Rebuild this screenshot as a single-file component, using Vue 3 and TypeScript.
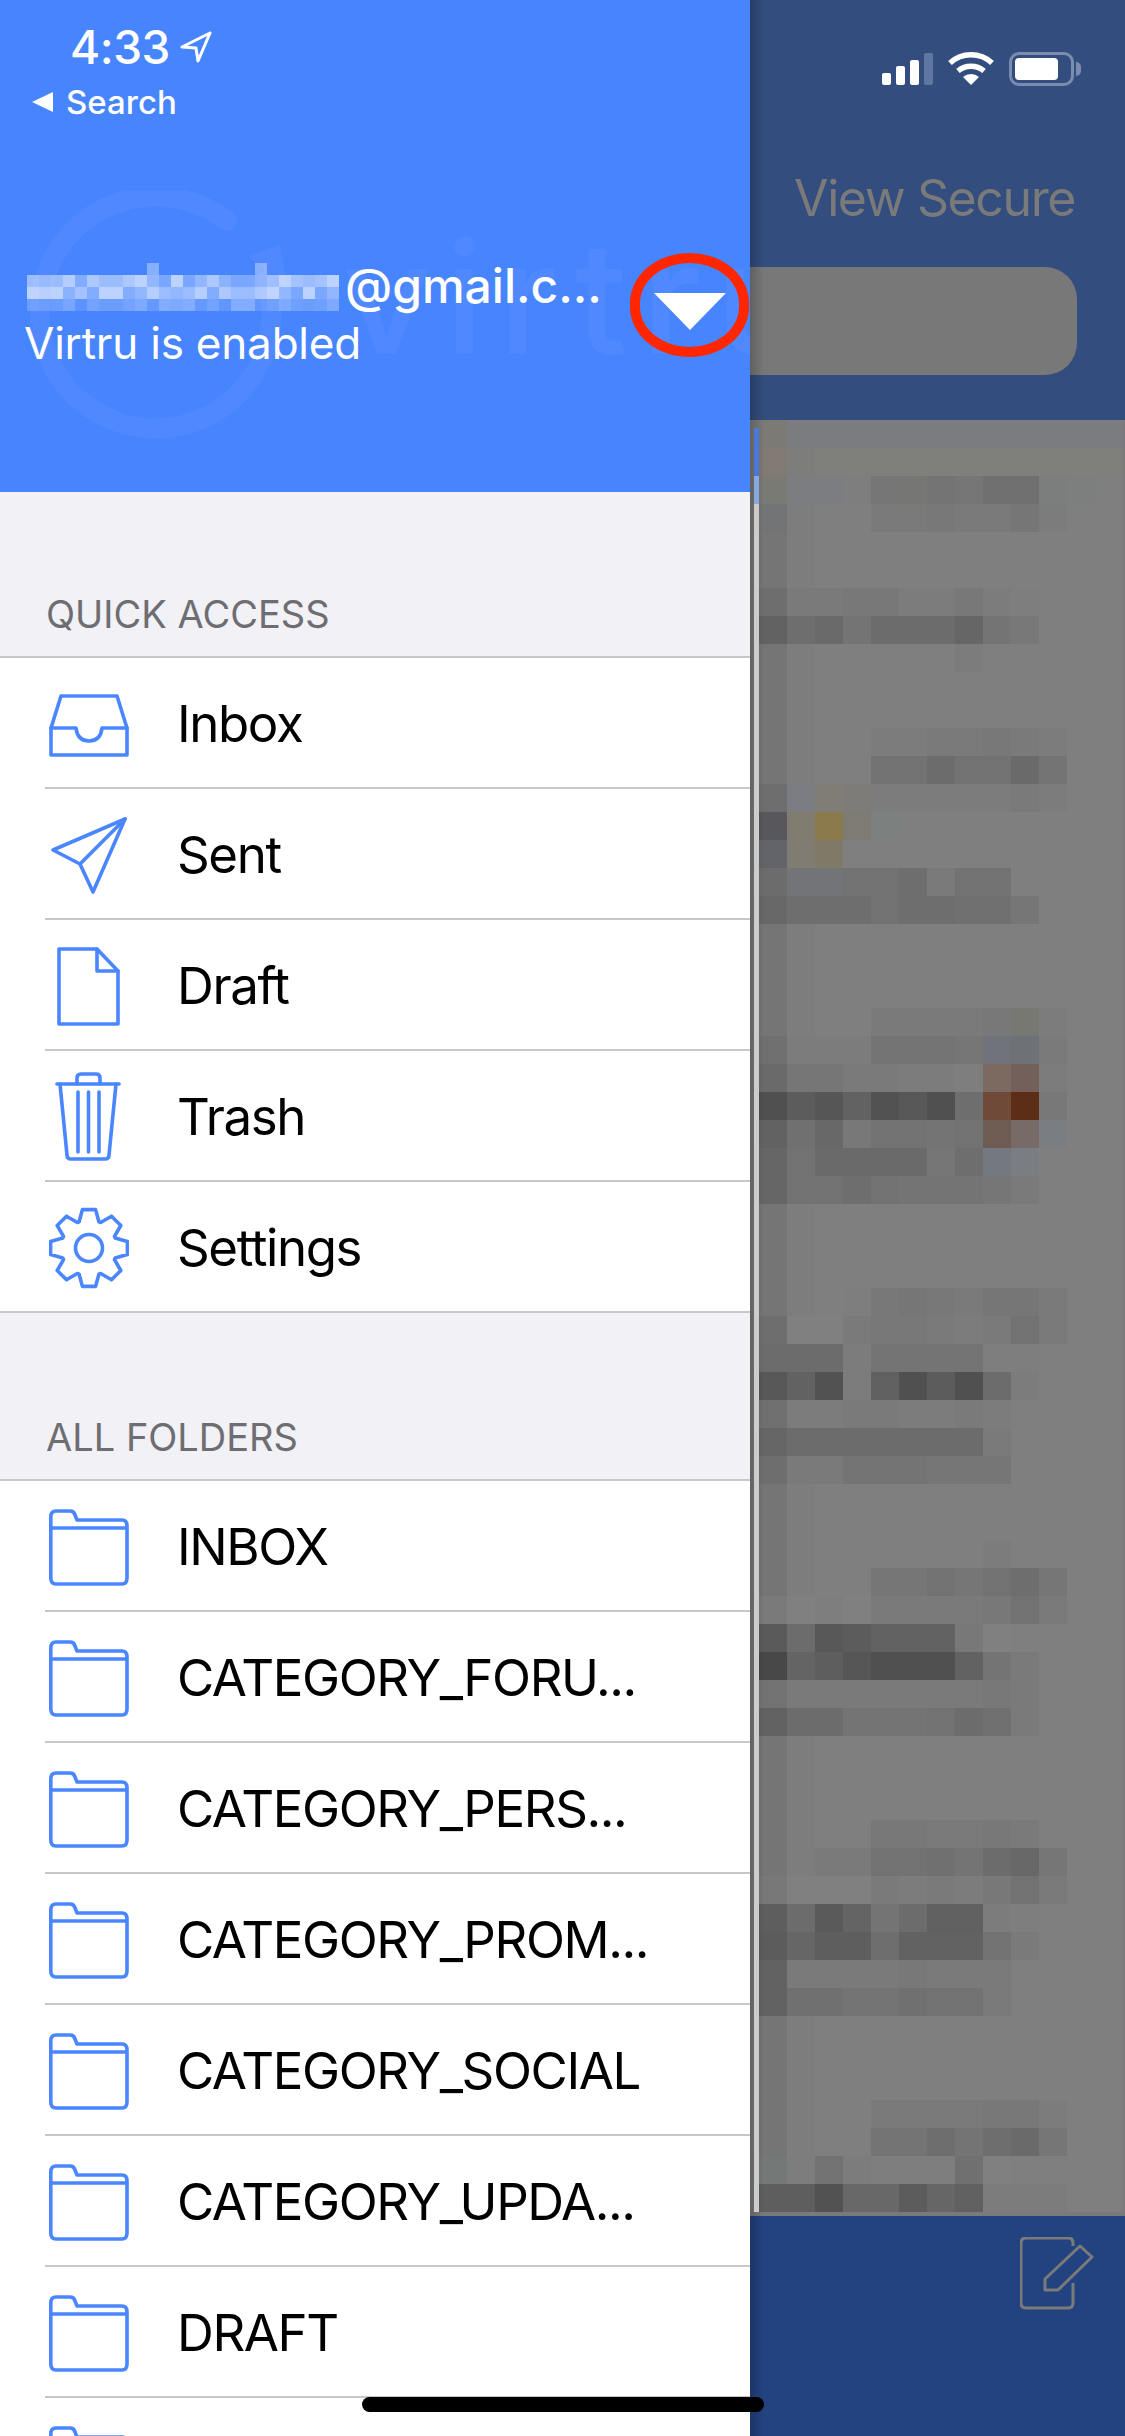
<template>
  <div class="screen">
    <aside class="drawer">
      <header class="drawerHead">
        <svg class="watermarkRing" width="300" height="300" viewBox="0 0 300 300">
          <path d="M197 31 A116 116 0 1 0 237 90" fill="none" stroke="#5089ff" stroke-width="20" stroke-linecap="round" />
          <path d="M218 66 L250 55 L258 100 Z" fill="#5089ff" />
        </svg>
        <span class="watermarkText">virtru</span>

        <div class="clock">
          <span>4:33</span>
          <svg width="32" height="32" viewBox="0 0 32 32">
            <path d="M30 2 L2 16 L16 17 L18 30 Z" fill="none" stroke="#fff" stroke-width="3" stroke-linejoin="round" />
          </svg>
        </div>
        <div class="backLink">
          <span class="backArrow"></span>
          <span>Search</span>
        </div>

        <div class="account">
          <div class="accountText">
            <div class="emailLine">
              <div class="emailBlur">
                <i v-for="(a, i) in blurCells" :key="i" :style="{ background: `rgba(255,255,255,${a})` }"></i>
              </div>
              <span>@gmail.c...</span>
            </div>
            <div class="accountStatus">Virtru is enabled</div>
          </div>
          <span class="accountCaret"></span>
        </div>
        <span class="redRing"></span>
      </header>

      <div class="sectionTitle">QUICK ACCESS</div>
      <ul class="menuList">
        <li v-for="item in quickAccess" :key="item.label" class="menuRow">
          <svg class="menuIcon" width="80" height="90" viewBox="0 -5 80 90">
            <g fill="none" stroke="#4a86ff" stroke-width="3.6" stroke-linejoin="round" stroke-linecap="round">
              <path v-for="d in item.paths" :key="d" :d="d" />
            </g>
          </svg>
          <span class="menuLabel">{{ item.label }}</span>
        </li>
      </ul>

      <div class="sectionTitle sectionTitle--folders">ALL FOLDERS</div>
      <ul class="menuList">
        <li v-for="(name, i) in folders" :key="i" class="menuRow">
          <svg class="menuIcon" width="80" height="90" viewBox="0 -5 80 90">
            <g fill="none" stroke="#4a86ff" stroke-width="3.6" stroke-linejoin="round">
              <path v-for="d in folderPaths" :key="d" :d="d" />
            </g>
          </svg>
          <span class="menuLabel">{{ name }}</span>
        </li>
      </ul>
    </aside>

    <section class="behind">
      <div class="navBar">
        <div class="statusIcons">
          <div class="signal">
            <i style="height: 12px"></i>
            <i style="height: 19px"></i>
            <i style="height: 25px"></i>
            <i class="signalOff" style="height: 32px"></i>
          </div>
          <svg width="46" height="34" viewBox="0 0 46 34">
            <path d="M2 11 A31 31 0 0 1 44 11" fill="none" stroke="#fff" stroke-width="5.5" />
            <path d="M10 19 A20 20 0 0 1 36 19" fill="none" stroke="#fff" stroke-width="5.5" />
            <path d="M23 33 L15 25 A12 12 0 0 1 31 25 Z" fill="#fff" />
          </svg>
          <div class="battery"><i></i></div>
          <span class="batteryCap"></span>
        </div>
        <div class="navTitle">View Secure</div>
        <div class="searchField"></div>
      </div>

      <div class="mailMosaic">
        <i v-for="(c, i) in mosaicCells" :key="i" :style="{ background: c }"></i>
      </div>

      <div class="toolbar">
        <svg width="74" height="74" viewBox="0 0 74 74">
          <g fill="none" stroke="#7a7a7a" stroke-width="3" stroke-linejoin="round">
            <path d="M53 9 V6 Q53 1 48 1 H6 Q1 1 1 6 V66 Q1 71 6 71 H48 Q53 71 53 66 V46" />
            <path d="M72 20 L60 9 L25 42 V53 H38 Z" />
          </g>
        </svg>
      </div>
      <span class="drawerShadow"></span>
      <span class="lightStrip"></span>
    </section>

    <span class="homeBar"></span>
  </div>
</template>

<script setup lang="ts">
function gearPath(): string {
  const pts: string[] = [];
  const outer = 39;
  const root = 28;
  for (let i = 0; i < 8; i++) {
    const a = (i * Math.PI) / 4 - Math.PI / 2;
    const steps: [number, number][] = [
      [root, a - 0.36],
      [outer, a - 0.17],
      [outer, a + 0.17],
      [root, a + 0.36],
    ];
    for (const [r, t] of steps) {
      pts.push(`${(40 + r * Math.cos(t)).toFixed(1)} ${(40 + r * Math.sin(t)).toFixed(1)}`);
    }
  }
  return `M${pts.join(' L')} Z M26.5 40 a13.5 13.5 0 1 0 27 0 a13.5 13.5 0 1 0 -27 0`;
}

const quickAccess = [
  {
    label: 'Inbox',
    paths: ['M2 44 L12 12 H68 L78 44 V71 H2 Z', 'M2 44 H27 C28 53 33 57 40 57 C47 57 52 53 53 44 H78'],
  },
  { label: 'Sent', paths: ['M76 4 L4 35 L31 49 L44 77 Z', 'M76 4 L31 49'] },
  { label: 'Draft', paths: ['M10 3 H48 L69 25 V78 H10 Z', 'M48 3 V25 H69'] },
  {
    label: 'Trash',
    paths: [
      'M8 7 H70',
      'M11 7 L18 78 Q18 82 22 82 H56 Q60 82 60 78 L67 7',
      'M28 7 V1 Q28 -3 32 -3 H47 Q51 -3 51 1 V7',
      'M29 15 V75',
      'M39.5 15 V75',
      'M50 15 V75',
    ],
  },
  { label: 'Settings', paths: [gearPath()] },
];

const folderPaths = [
  'M1.8 10 Q1.8 4 7 4 H21 Q25 4 26 8 L28 13 H73 Q78 13 78 19 V71 Q78 77 73 77 H7 Q1.8 77 1.8 71 Z',
  'M1.8 21 H78',
];

const folders = [
  'INBOX',
  'CATEGORY_FORU...',
  'CATEGORY_PERS...',
  'CATEGORY_PROM...',
  'CATEGORY_SOCIAL',
  'CATEGORY_UPDA...',
  'DRAFT',
  '',
];

// pixelated address, 26 x 4 cells, top row only has the two ascenders
const blurCells: number[] = [];
for (let r = 0; r < 4; r++) {
  for (let c = 0; c < 26; c++) {
    if (r === 0) {
      blurCells.push(c === 10 || c === 19 ? 0.35 : 0);
    } else {
      const n = (c * 7 + r * 13 + ((c * c) % 11)) % 9;
      blurCells.push(r === 3 ? 0.12 + n * 0.025 : 0.28 + n * 0.045);
    }
  }
}

// blurred mail list behind the drawer: 13 columns, 64 rows of 28px
const ROW_OVERRIDES: Record<number, string> = {
  0: '7b7a74 7a7c80 7a7c80 7a7c80 7a7c80 7a7c80 7a7c80 7a7c80 7a7c80 7a7c80 7a7c80 7a7c80 7a7c80',
  1: '807a72 7d7e7c 7f7f7c 7f7f7c 7f7f7c 7f7f7c 7f7f7c 7f7f7c 7f7f7c 7f7f7c 7f7f7c 7f7f7c 7f7f7c',
  2: '7a7a74 7b7d80 7b7d80 7e 76 767775 74 76 70 70 7b7e7c 7c7f7d',
  3: '727476 . . . 7a 7a 78 7a 7a 76 7c',
  6: '6e 7a 7a 78 78 7c 7c 78 7c 7e',
  7: '62 6e 6a 74 6c 6c 6c 66 74 78',
  8: '. . . . . . . 7c',
  11: '. . . . 7c 7c 7a 7a 78 7a 7c',
  12: '. . . . 72 72 6c 72 72 6a 74',
  13: '6e 7b7d82 7f7d76 7e7c78 7c 7c 7c 7c 7c 7a 7c',
  14: '58585c 807c70 8a7a4c 7e7a74 7c807e',
  15: '62646a 807c72 7f7a68',
  16: '6c 727478 727478 72 72 6e 7a 72 72',
  17: '68 6e 6e 6e 72 6e 6e 70 70 76',
  21: '. . . . 7a 7a 7a 7a 78 787872 7c',
  22: '70 7c 7c 7c 74 74 74 76 70747a 6e7276 7a',
  23: '6a 76 76 7a 7a 7c 7c 7e 7c6a60 74605a 7c',
  24: '50 5c 56 62 52 58 50 6e 704a38 5c2e18 78',
  25: '62 70 68 78 72 72 74 72 6e5c52 786a66 7a7e82',
  26: '66 72 6a 6a 6a 6a 76 6e 747880 7a7e82',
  27: '66 72 72 6e 72 74 74 74 76 7a',
  31: '. . . 7e 78 76 78 7a 76 76 7a',
  32: '6e 80 80 7a 78 78 7a 7c 7a 72 7a',
  33: '6c 6c 6c 7c 74 74 74 74 7e 7e',
  34: '58 62 52 7c 60 50 5c 50 6c 7c',
  35: '70 7c 7c 7a 7a 7c 7c 7a 7c',
  36: '66 6c 6c 6c 6c 6c 6c 6c 7a',
  37: '6e 7a 7a 74 74 74 76 76 76',
  40: '. . . . . . . . 7c',
  41: '. . . . 76 76 72 76 72 6e 76',
  42: '7a 80 7e 80 7a 7a 7a 7a 78 72 7a',
  43: '5a 6c 58 5c 62 62 62 78 80',
  44: '48 64 5e 56 50 50 50 62 74 7a',
  45: '72 7a 7a 7a 7a 7a 7a 7a 78 7a',
  46: '62 6c 6c 74 74 74 72 6c 70 7a',
  50: '. . . . 78 78 7a 7a 78 7a',
  51: '. . 7a 7a 72 72 70 74 6c 68 76',
  52: '78 80 80 80 7a 7c 7a 7c 78 72 7a',
  53: '5e 6c 5a 64 74 6c 60 60 7c 7e',
  54: '5c 66 5e 5e 6e 62 62 62 72 7a',
  55: '62 7a 7a 7a 7a 78 7a 7a 7a',
  56: '62 70 70 74 74 70 72 72 7a',
  60: '. . . . 7a 7a 7a 7a 78 78 7c',
  61: '. . . . 74 74 6e 74 6e 6a 76',
  62: '747876 . 72 7c 7e 7e 7e 70 80',
  63: '5e 5e 52 68 68 5c 66 60 7c 7c 7c',
};

function cellColor(col: number, token?: string): string {
  if (token && token !== '.') return token.length === 2 ? `#${token}${token}${token}` : `#${token}`;
  if (col === 0) return '#757575';
  if (col === 1) return '#7d7d7d';
  return '#7f7f7f';
}

const mosaicCells: string[] = [];
for (let r = 0; r < 64; r++) {
  const tokens = ROW_OVERRIDES[r]?.split(' ') ?? [];
  for (let c = 0; c < 13; c++) {
    mosaicCells.push(cellColor(c, tokens[c]));
  }
}
</script>

<style>
html,
body {
  margin: 0;
  background: #234280;
}
</style>

<style scoped>
.screen {
  position: relative;
  display: flex;
  width: 1125px;
  height: 2436px;
  overflow: hidden;
  font-family: Inter, 'Liberation Sans', sans-serif;
}

.drawer {
  flex: 0 0 750px;
  height: 2436px;
  overflow: hidden;
  background: #f1f1f6;
}

.drawerHead {
  position: relative;
  box-sizing: border-box;
  height: 492px;
  padding-top: 24px;
  overflow: hidden;
  background: #4785ff;
  color: #fff;
}

.watermarkRing {
  position: absolute;
  left: 30px;
  top: 190px;
}

.watermarkText {
  position: absolute;
  left: 342px;
  top: 198px;
  font-size: 155px;
  font-weight: 500;
  line-height: 200px;
  letter-spacing: 14px;
  color: #5089ff;
}

.clock {
  position: relative;
  display: flex;
  align-items: center;
  gap: 10px;
  height: 46px;
  padding-left: 70px;
  font-size: 46px;
  font-weight: 500;
  letter-spacing: -0.5px;
}

.backLink {
  position: relative;
  display: flex;
  align-items: center;
  gap: 13px;
  height: 40px;
  margin-top: 12px;
  padding-left: 32px;
  font-size: 33px;
  font-weight: 500;
}

.backArrow {
  width: 0;
  height: 0;
  border-top: 10px solid transparent;
  border-bottom: 10px solid transparent;
  border-right: 21px solid #fff;
}

.account {
  position: relative;
  display: flex;
  justify-content: space-between;
  margin-top: 135px;
  padding: 0 24px 0 27px;
}

.emailLine {
  display: flex;
  align-items: center;
  gap: 6px;
  height: 57px;
  font-size: 48px;
  line-height: 57px;
  font-weight: 500;
}

.emailBlur {
  display: grid;
  grid-template-columns: repeat(26, 12px);
  grid-auto-rows: 12px;
  margin-top: 2px;
}

.accountStatus {
  margin: 4px 0 0 -3px;
  font-size: 44px;
  line-height: 50px;
  letter-spacing: -0.2px;
}

.accountCaret {
  width: 0;
  height: 0;
  margin-top: 36px;
  border-left: 36px solid transparent;
  border-right: 36px solid transparent;
  border-top: 37px solid #fff;
}

.redRing {
  position: absolute;
  left: 630px;
  top: 253px;
  box-sizing: border-box;
  width: 119px;
  height: 104px;
  border: 10px solid #ff2600;
  border-radius: 50% / 48%;
}

.sectionTitle {
  display: flex;
  align-items: flex-end;
  box-sizing: border-box;
  height: 166px;
  padding: 0 0 22px 46px;
  font-size: 38px;
  line-height: 44px;
  color: #6d6d72;
}

.sectionTitle--folders {
  height: 168px;
}

.menuList {
  margin: 0;
  padding: 0;
  list-style: none;
  background: #fff;
  border-top: 2px solid #c8c7cc;
  margin-top: -2px;
}

.menuRow {
  position: relative;
  display: flex;
  align-items: center;
  gap: 48px;
  box-sizing: border-box;
  height: 131px;
  padding-left: 49px;
}

.menuRow::after {
  content: '';
  position: absolute;
  left: 45px;
  right: 0;
  bottom: 0;
  height: 2px;
  background: #c8c7cc;
}

.menuRow:last-child::after {
  left: 0;
}

.menuIcon {
  flex: none;
}

.menuLabel {
  font-size: 51px;
  letter-spacing: -1.4px;
  color: #000;
  white-space: nowrap;
}

.behind {
  position: relative;
  display: flex;
  flex: 1;
  flex-direction: column;
  height: 2436px;
  background: #7f7f7f;
}

.navBar {
  box-sizing: border-box;
  height: 428px;
  padding-top: 52px;
  background: linear-gradient(#324d7e 420px, #7a7a7a 420px);
}

.statusIcons {
  display: flex;
  align-items: center;
  height: 34px;
  padding-left: 132px;
}

.signal {
  display: flex;
  align-items: flex-end;
  gap: 5px;
  height: 32px;
  margin-right: 15px;
}

.signal i {
  width: 9px;
  border-radius: 2px;
  background: #fff;
}

.signal .signalOff {
  background: #5f76a0;
}

.battery {
  box-sizing: border-box;
  width: 65px;
  height: 34px;
  margin-left: 15px;
  padding: 3px;
  border: 3px solid #7a8db0;
  border-radius: 10px;
}

.battery i {
  display: block;
  width: 43px;
  height: 22px;
  border-radius: 4px;
  background: #fff;
}

.batteryCap {
  width: 5px;
  height: 14px;
  margin-left: 2px;
  border-radius: 0 6px 6px 0;
  background: #7a8db0;
}

.navTitle {
  margin-top: 82px;
  padding-right: 50px;
  font-size: 50px;
  line-height: 60px;
  letter-spacing: -1.4px;
  text-align: right;
  color: #7a7a7a;
}

.searchField {
  height: 108px;
  margin: 39px 48px 0 0;
  border-radius: 0 32px 32px 0;
  background: #787878;
}

.mailMosaic {
  display: grid;
  flex: none;
  grid-template-columns: repeat(13, 28px);
  grid-auto-rows: 28px;
  height: 1792px;
  margin-top: -8px;
  padding-left: 9px;
  overflow: hidden;
  background: #7a7a7a;
}

.toolbar {
  display: flex;
  flex: 1;
  justify-content: flex-end;
  box-sizing: border-box;
  padding: 21px 31px 0 0;
  border-top: 4px solid #7a7a7a;
  background: #234280;
}

.drawerShadow {
  position: absolute;
  left: 0;
  top: 0;
  bottom: 0;
  width: 14px;
  background: linear-gradient(90deg, rgba(0, 0, 0, 0.2), rgba(0, 0, 0, 0));
}

.lightStrip {
  position: absolute;
  left: 4px;
  top: 428px;
  width: 5px;
  height: 1784px;
  background: linear-gradient(#4a78d8 48px, #88a8e0 48px, #88a8e0 76px, #cdc8c4 76px, #cccccc 110px);
}

.homeBar {
  position: absolute;
  left: 362px;
  top: 2397px;
  width: 402px;
  height: 15px;
  border-radius: 8px;
  background: #000;
}
</style>
